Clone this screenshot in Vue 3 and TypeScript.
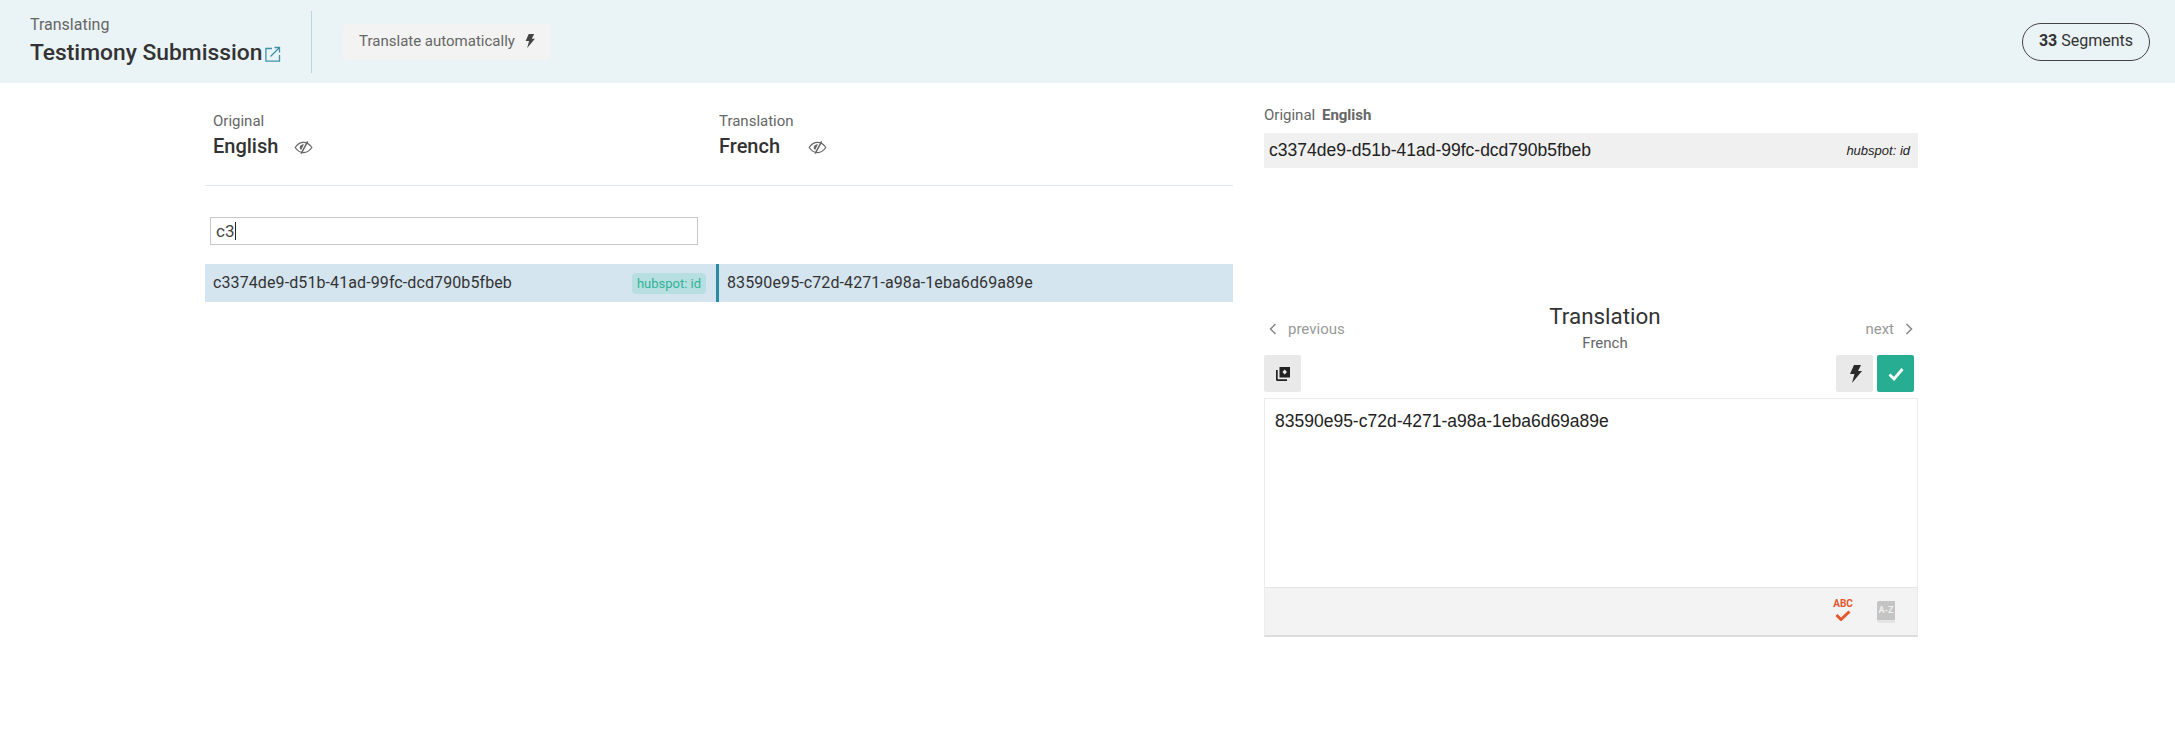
<script setup lang="ts">
const original = 'c3374de9-d51b-41ad-99fc-dcd790b5fbeb'
const translation = '83590e95-c72d-4271-a98a-1eba6d69a89e'
</script>

<template>
  <div class="page">
    <header class="top">
      <div class="doc">
        <div class="doc-label">Translating</div>
        <div class="doc-title">Testimony Submission<svg class="ext" viewBox="0 0 16 16" width="16" height="16" fill="none" stroke="#3f93a8"><path d="M7 2.500H.9v12.600h13.600V9" stroke-width="1.300"/><path d="M5.500 10.500 14 2M9.500 1.500h5v5" stroke-width="1.300"/></svg></div>
      </div>
      <div class="auto">Translate automatically<svg class="bolt-s" viewBox="0 0 14 18" width="11" height="14"><path d="M6 0h7l-3 6h4L4 18l2.500-9H2z" fill="#444"/></svg></div>
      <div class="pill"><b>33</b> Segments</div>
    </header>

    <main class="main">
      <section class="left">
        <div class="cols">
          <div class="col-head">
            <div class="small">Original</div>
            <div class="lang">English<svg class="eye" viewBox="0 0 20 14" width="19" height="13" fill="none" stroke="#666" stroke-width="1.300"><path d="M1 7c2.500-3.600 5.500-5.500 9-5.500S16.500 3.400 19 7c-2.500 3.600-5.500 5.500-9 5.500S3.500 10.600 1 7z"/><path d="M14.500.5 7.500 13.500" stroke-width="1.600"/><path d="M10.500 3.500 7.500 9.800C6 8.800 5.700 7.500 6 6.300c.6-1.800 2.500-3 4.500-2.800z" fill="#666" stroke="none"/></svg></div>
          </div>
          <div class="col-head">
            <div class="small">Translation</div>
            <div class="lang">French<svg class="eye eye-fr" viewBox="0 0 20 14" width="19" height="13" fill="none" stroke="#666" stroke-width="1.300"><path d="M1 7c2.500-3.600 5.500-5.500 9-5.500S16.500 3.400 19 7c-2.500 3.600-5.500 5.500-9 5.500S3.500 10.600 1 7z"/><path d="M14.500.5 7.500 13.500" stroke-width="1.600"/><path d="M10.500 3.500 7.500 9.800C6 8.800 5.700 7.500 6 6.300c.6-1.800 2.500-3 4.500-2.800z" fill="#666" stroke="none"/></svg></div>
          </div>
        </div>
        <div class="search">c3<span class="caret"></span></div>
        <div class="row">
          <div class="cell cell-a"><span>{{ original }}</span><span class="badge">hubspot: id</span></div>
          <div class="cell cell-b"><span>{{ translation }}</span></div>
        </div>
      </section>

      <section class="right">
        <div class="src-head">Original <b>English</b></div>
        <div class="src-box"><span>{{ original }}</span><i>hubspot: id</i></div>

        <div class="tr-head">
          <div class="nav nav-prev"><svg viewBox="0 0 10 14" width="10" height="14" fill="none" stroke="#888" stroke-width="1.500"><path d="M7.500 2 2.500 7l5 5"/></svg><span>previous</span></div>
          <div class="tr-title">
            <div class="tr-name">Translation</div>
            <div class="tr-lang">French</div>
          </div>
          <div class="nav nav-next"><span>next</span><svg viewBox="0 0 10 14" width="10" height="14" fill="none" stroke="#888" stroke-width="1.500"><path d="M2.500 2l5 5-5 5"/></svg></div>
        </div>

        <div class="tools">
          <div class="btn"><svg viewBox="0 0 16 16" width="16" height="16"><path d="M1 4h1.700v9.300H12V15H2.500C1.600 15 1 14.400 1 13.500z" fill="#222"/><path d="M4.500 1H15v10.500H4.500zM9.700 3.400 7.400 6l2.300 2.600L12 6z" fill="#222" fill-rule="evenodd"/></svg></div>
          <div class="tools-right">
            <div class="btn"><svg viewBox="0 0 14 18" width="14" height="18"><path d="M6 0h7l-3 6h4L4 18l2.500-9H2z" fill="#2b2b2b"/></svg></div>
            <div class="btn btn-ok"><svg viewBox="0 0 16 14" width="16" height="14" fill="none" stroke="#fff" stroke-width="2.800"><path d="M1.500 7.500 6 12l8.500-10"/></svg></div>
          </div>
        </div>

        <div class="editor">
          <div class="editor-text">{{ translation }}</div>
          <div class="editor-foot">
            <div class="abc"><span>ABC</span><svg viewBox="0 0 16 11" width="16" height="11" fill="none" stroke="#e4572e" stroke-width="3"><path d="M1.500 5 6 9.500 14.500 1.500"/></svg></div>
            <div class="book"><span>A-Z</span></div>
          </div>
        </div>
      </section>
    </main>
  </div>
</template>

<style>
html, body { margin: 0; background: #fff; }
</style>

<style scoped>
.page { width: 2175px; height: 735px; overflow: hidden; font-family: Roboto, sans-serif; color: #333; background: #fff; }

.top { height: 83px; background: #eaf3f6; display: flex; align-items: center; padding: 0 25px 0 30px; box-sizing: border-box; }
.doc { width: 281px; height: 62px; border-right: 1px solid #bcd6e0; box-sizing: content-box; display: flex; flex-direction: column; justify-content: center; }
.doc-label { font-size: 16px; line-height: 18px; color: #666; margin-top: -1px; }
.doc-title { font-size: 22.800px; line-height: 28px; font-weight: 500; margin-top: 5px; color: #333; display: flex; align-items: center; }
.ext { margin: 3px 0 0 3px; }
.auto { margin-left: 31px; height: 36px; width: 208px; padding-bottom: 2px; box-sizing: border-box; background: #f3f3f3; border-radius: 4px; font-size: 15px; color: #666; display: flex; align-items: center; justify-content: center; gap: 9px; }
.pill { margin-left: auto; width: 128px; height: 38px; box-sizing: border-box; padding-bottom: 2px; border: 1px solid #444; border-radius: 19px; font-size: 16px; display: flex; align-items: center; justify-content: center; white-space: pre; }
.pill b { font-weight: 700; }

.main { display: flex; padding-left: 205px; gap: 31px; }
.left { width: 1028px; }
.cols { display: flex; height: 103px; box-sizing: border-box; border-bottom: 1px solid #dfe7f0; padding: 29px 0 0 8px; }
.col-head { width: 506px; }
.small { font-size: 15px; line-height: 18px; color: #666; }
.lang { font-size: 20px; line-height: 26px; font-weight: 500; margin-top: 3px; color: #333; display: flex; align-items: center; }
.eye { margin-left: 16px; margin-top: 2px; }
.eye-fr { margin-left: 28px; }
.search { margin: 31px 0 0 5px; width: 488px; height: 28px; box-sizing: border-box; border: 1px solid #c8c8c8; padding-left: 5px; font-size: 17px; display: flex; align-items: center; color: #444; }
.caret { width: 1px; height: 18px; background: #222; margin-left: 1px; }
.row { display: flex; height: 38px; margin-top: 19px; background: #d4e5ef; font-size: 16px; letter-spacing: .1px; color: #333; }
.cell { display: flex; align-items: center; box-sizing: border-box; padding-bottom: 1px; }
.cell-a { width: 511px; padding-left: 8px; padding-right: 10px; justify-content: space-between; }
.cell-b { flex: 1; border-left: 3px solid #2a8ba3; padding-left: 8px; }
.badge { height: 21px; width: 74px; margin-top: 1px; background: #b8dfe0; border-radius: 4px; color: #2fb39a; font-size: 13px; letter-spacing: 0; display: flex; align-items: center; justify-content: center; }

.right { width: 654px; }
.src-head { margin-top: 23px; font-size: 15px; line-height: 18px; color: #666; }
.src-head b { font-weight: 700; margin-left: 3px; }
.src-box { margin-top: 9px; height: 35px; background: #f0f0f0; display: flex; align-items: center; justify-content: space-between; padding: 0 8px 0 5px; font-family: "Liberation Sans", Arial, sans-serif; font-size: 17.500px; color: #222; }
.src-box i { font-size: 13px; }
.tr-head { margin-top: 132px; height: 55px; display: flex; justify-content: space-between; align-items: center; }
.nav { display: flex; align-items: center; gap: 10px; font-size: 15px; color: #999; box-sizing: border-box; margin-top: 3px; padding: 0 4px; }
.nav-prev { width: 138px; }
.nav-next { width: 110px; justify-content: flex-end; }
.tr-title { text-align: center; margin-top: -1px; }
.tr-name { font-size: 22.400px; line-height: 30px; color: #333; }
.tr-lang { font-size: 15px; line-height: 20px; color: #666; margin-top: 2px; }
.tools { display: flex; justify-content: space-between; height: 37px; padding-right: 4px; }
.tools-right { display: flex; gap: 4px; }
.btn { width: 37px; height: 37px; background: #e9e9e9; border-radius: 2px; display: flex; align-items: center; justify-content: center; }
.btn-ok { background: #26ad92; }
.editor { margin-top: 6px; height: 239px; box-sizing: border-box; border: 1px solid #ececec; border-bottom: 2px solid #ddd; display: flex; flex-direction: column; }
.editor-text { flex: 1; padding: 12px 10px; font-family: "Liberation Sans", Arial, sans-serif; font-size: 17.500px; line-height: 21px; color: #222; }
.editor-foot { height: 48px; flex: none; background: #f3f3f3; border-top: 1px solid #e6e6e6; display: flex; align-items: center; justify-content: flex-end; padding-right: 22px; gap: 25px; box-sizing: border-box; }
.abc { display: flex; flex-direction: column; align-items: center; width: 18px; color: #e4572e; font-size: 10px; font-weight: 700; line-height: 9px; margin-top: -4px; }
.abc svg { margin-top: 2px; }
.book { width: 18px; height: 22px; background: #c4c4c4; border-radius: 2px 0 0 2px; border-bottom: 3px solid #e4e4e4; box-sizing: border-box; display: flex; justify-content: center; padding-top: 5px; font-size: 9px; font-weight: 700; color: #eee; line-height: 9px; }
</style>
